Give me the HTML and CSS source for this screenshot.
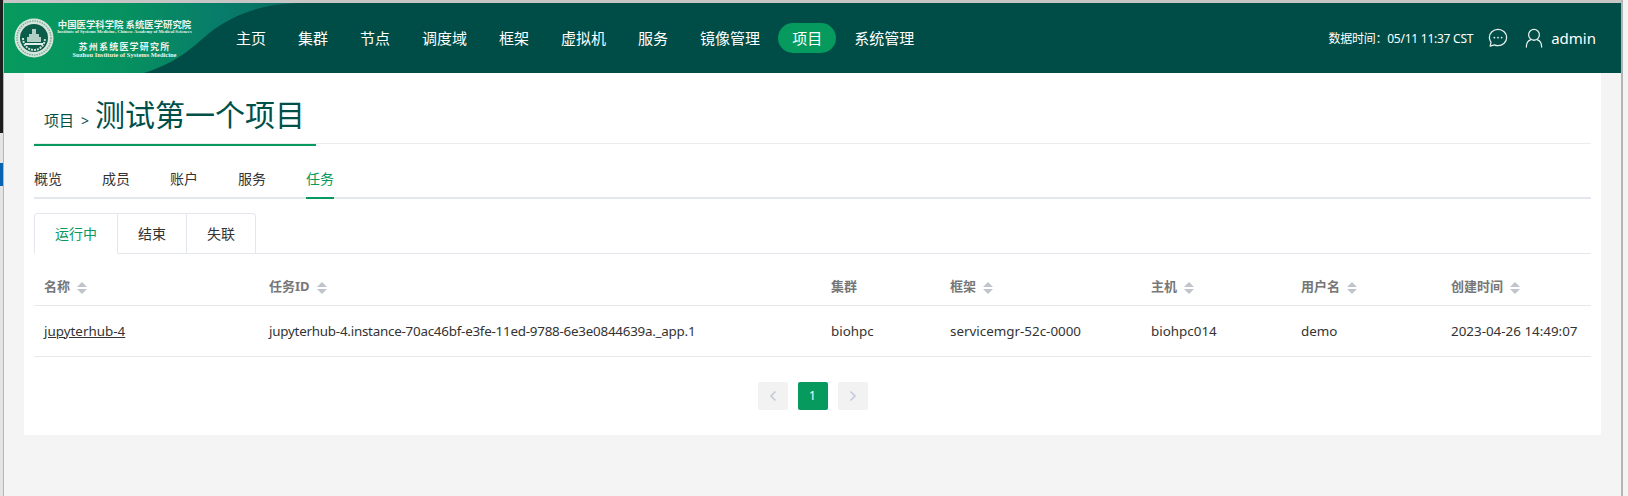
FILE: index.html
```html
<!DOCTYPE html>
<html lang="zh">
<head>
<meta charset="utf-8">
<title>测试第一个项目</title>
<link rel="stylesheet" href="styles.css">
</head>
<body>
<div class="desktop">
  <div class="edge">
    <div class="edge-dark"></div>
    <div class="edge-light"></div>
    <div class="edge-blue"></div>
    <div class="edge-rest"></div>
  </div>
  <div class="window">
    <header class="topbar">
      <div class="brand">
        <svg class="brand-bg" width="300" height="70" viewBox="0 0 300 70" aria-hidden="true">
          <defs>
            <linearGradient id="bg" x1="0" y1="0" x2="1" y2="0">
              <stop offset="0" stop-color="#069a5e"/>
              <stop offset="0.4" stop-color="#06915f"/>
              <stop offset="0.75" stop-color="#087b6b"/>
              <stop offset="1" stop-color="#07695f"/>
            </linearGradient>
          </defs>
          <path d="M0 0H296C262 1 236 8 209 27C190 42 178 58 140 70H0Z" fill="url(#bg)"/>
        </svg>
        <svg class="seal" width="40" height="40" viewBox="0 0 40 40" aria-hidden="true">
          <circle cx="20" cy="20" r="19.5" fill="#d5e6dd"/>
          <circle cx="20" cy="20" r="17" fill="none" stroke="#7fae9b" stroke-width="1.5" stroke-dasharray="1.5 1"/>
          <circle cx="20" cy="20" r="14" fill="#0b5c48"/>
          <path d="M9 20C9 27 14 32 20 32S31 27 31 20" fill="none" stroke="#cfe3da" stroke-width="2" stroke-dasharray="2 1"/>
          <path d="M13 19H27V24H13ZM15 16H25V19H15ZM18 11H22V16H18Z" fill="#cfe3da" opacity=".85"/>
          <path d="M11 26H29" stroke="#e3efe9" stroke-width="2"/>
        </svg>
        <div class="brand-text">
          <div class="org-cn">中国医学科学院 系统医学研究院</div>
          <div class="org-en">Institute of Systems Medicine, Chinese Academy of Medical Sciences</div>
          <div class="org-cn2">苏州系统医学研究所</div>
          <div class="org-en2">Suzhou Institute of Systems Medicine</div>
        </div>
      </div>
      <nav class="nav">
        <a class="nav-item">主页</a>
        <a class="nav-item">集群</a>
        <a class="nav-item">节点</a>
        <a class="nav-item">调度域</a>
        <a class="nav-item">框架</a>
        <a class="nav-item">虚拟机</a>
        <a class="nav-item">服务</a>
        <a class="nav-item">镜像管理</a>
        <a class="nav-item nav-active">项目</a>
        <a class="nav-item">系统管理</a>
      </nav>
      <div class="status">
        <span class="data-time">数据时间：05/11 11:37 CST</span>
        <svg class="icon-chat" width="20" height="20" viewBox="0 0 22 22" aria-hidden="true">
          <path d="M11 1.5C5.7 1.5 1.5 5.5 1.5 10.4c0 2 .7 3.700 1.800 5.200l-.9 4.300 4.600-1.400c1.200.6 2.600.9 4 .9 5.300 0 9.500-4 9.500-9S16.300 1.500 11 1.500Z" fill="none" stroke="#e6efec" stroke-width="1.400" stroke-linejoin="round"/>
          <circle cx="7" cy="10.500" r="1" fill="#e6efec"/>
          <circle cx="11" cy="10.500" r="1" fill="#e6efec"/>
          <circle cx="15" cy="10.500" r="1" fill="#e6efec"/>
        </svg>
        <svg class="icon-user" width="18" height="20" viewBox="0 0 20 22" aria-hidden="true">
          <circle cx="10" cy="7.500" r="6" fill="none" stroke="#e6efec" stroke-width="1.400"/>
          <path d="M1.500 21c0-4.500 2.500-7.500 5.200-8.300M18.500 21c0-4.500-2.500-7.500-5.200-8.300" fill="none" stroke="#e6efec" stroke-width="1.400" stroke-linecap="round"/>
        </svg>
        <span class="username">admin</span>
      </div>
    </header>
    <main class="page">
      <section class="card">
        <div class="crumbs">
          <div class="crumb-inner">
            <span class="crumb-link">项目</span>
            <span class="crumb-sep">&gt;</span>
            <h1 class="crumb-title">测试第一个项目</h1>
          </div>
        </div>
        <div class="tabs">
          <a class="tab">概览</a>
          <a class="tab">成员</a>
          <a class="tab">账户</a>
          <a class="tab">服务</a>
          <a class="tab tab-active">任务</a>
        </div>
        <div class="subtabs">
          <a class="subtab subtab-active">运行中</a>
          <a class="subtab">结束</a>
          <a class="subtab">失联</a>
        </div>
        <table class="grid">
          <colgroup>
            <col class="c1"><col class="c2"><col class="c3"><col class="c4"><col class="c5"><col class="c6"><col class="c7">
          </colgroup>
          <thead>
            <tr>
              <th>名称<span class="sort"></span></th>
              <th>任务ID<span class="sort"></span></th>
              <th>集群</th>
              <th>框架<span class="sort"></span></th>
              <th>主机<span class="sort"></span></th>
              <th>用户名<span class="sort"></span></th>
              <th>创建时间<span class="sort"></span></th>
            </tr>
          </thead>
          <tbody>
            <tr>
              <td><a class="job-link">jupyterhub-4</a></td>
              <td class="job-id">jupyterhub-4.instance-70ac46bf-e3fe-11ed-9788-6e3e0844639a._app.1</td>
              <td>biohpc</td>
              <td>servicemgr-52c-0000</td>
              <td>biohpc014</td>
              <td>demo</td>
              <td>2023-04-26 14:49:07</td>
            </tr>
          </tbody>
        </table>
        <div class="pager">
          <span class="page-btn"><svg width="8" height="12" viewBox="0 0 8 12" aria-hidden="true"><path d="M6.500 1.500 2 6l4.500 4.500" fill="none" stroke="#c3c9d6" stroke-width="1.600"/></svg></span>
          <span class="page-btn page-current">1</span>
          <span class="page-btn"><svg width="8" height="12" viewBox="0 0 8 12" aria-hidden="true"><path d="M1.500 1.500 6 6l-4.500 4.500" fill="none" stroke="#c3c9d6" stroke-width="1.600"/></svg></span>
        </div>
      </section>
    </main>
  </div>
  <div class="edge-right"></div>
</div>
</body>
</html>
```
FILE: styles.css
```css
* { box-sizing: border-box; }
html, body { margin: 0; padding: 0; height: 496px; overflow: hidden; background: #f4f4f4; }
body { font-family: "Noto Sans", "Noto Sans CJK SC", sans-serif; font-size: 14px; color: #333; }
a { color: inherit; }

.desktop { display: flex; height: 496px; }

.edge { width: 4px; flex: none; display: flex; flex-direction: column; border-right: 1px solid #b5b5b5; }
.edge-dark { height: 133px; background: #1e1e1e; }
.edge-light { height: 30px; background: #e4e4e4; }
.edge-blue { height: 23px; background: #0a63b0; }
.edge-rest { flex: 1; background: #e4e4e4; }
.edge-right { width: 7px; flex: none; background: #f4f4f4; border-left: 2px solid #b5b5b5; }

.window { flex: 1; min-width: 0; display: flex; flex-direction: column; border-top: 3px solid #c6c6c6; }

.topbar { height: 70px; flex: none; background: #004d47; color: #fff; display: flex; align-items: center; position: relative; }
.brand { width: 218px; height: 70px; flex: none; display: flex; align-items: center; padding-left: 10px; }
.brand-bg { position: absolute; left: 0; top: 0; }
.seal { position: relative; flex: none; }
.brand-text { position: relative; margin-left: 5px; width: 131px; flex: none; color: #eaf4ef; text-align: center; font-family: "Noto Sans CJK SC", sans-serif; }
.org-cn { font-size: 9.400px; line-height: 11px; font-weight: 700; white-space: nowrap; display: flex; justify-content: center; }
.org-en { font-size: 4.600px; line-height: 4px; white-space: nowrap; font-family: "Liberation Serif", serif; font-weight: 700; display: flex; justify-content: center; }
.org-cn2 { font-size: 9px; line-height: 11px; margin-top: 7px; font-weight: 700; letter-spacing: 1.200px; }
.org-en2 { font-size: 6.500px; line-height: 6px; white-space: nowrap; font-family: "Liberation Serif", serif; font-weight: 700; }

.nav { display: flex; align-items: center; gap: 4px; }
.nav-item { font-size: 15px; line-height: 30px; height: 30px; padding: 0 14px; border-radius: 15px; white-space: nowrap; font-family: "Noto Sans CJK SC", sans-serif; }
.nav-active { background: #069a5e; }

.status { margin-left: auto; display: flex; align-items: center; padding-right: 25px; }
.data-time { font-size: 12px; letter-spacing: -.25px; }
.icon-chat { margin-left: 15px; }
.icon-user { margin-left: 17px; }
.username { margin-left: 8px; font-size: 15px; }

.page { flex: 1; padding: 0 20px; }
.card { background: #fff; height: 362px; padding: 0 10px; }

.crumbs { height: 71px; margin-bottom: 1px; border-bottom: 1px solid #ececec; }
.crumb-inner { width: 282px; height: 73px; border-bottom: 2px solid #069a5e; display: flex; align-items: baseline; padding: 22px 0 0 10px; }
.crumb-link { font-size: 15px; color: #00504a; }
.crumb-sep { font-size: 14px; color: #00504a; margin: 0 6px 0 7px; }
.crumb-title { margin: 0; font-size: 30px; font-weight: 400; color: #00504a; line-height: 40px; }

.tabs { display: flex; gap: 40px; height: 54px; border-bottom: 2px solid #e4e7ed; }
.tab { font-size: 14px; line-height: 20px; padding: 24px 0 0; margin-bottom: -2px; color: #333; }
.tab-active { color: #069a5e; border-bottom: 2px solid #069a5e; }

.subtabs { display: flex; margin-top: 14px; height: 41px; border-bottom: 1px solid #e4e7ed; }
.subtab { font-size: 14px; line-height: 40px; height: 41px; padding: 0 20px; border: 1px solid #e4e7ed; border-left: none; color: #333; background: #fff; }
.subtab:first-child { border-left: 1px solid #e4e7ed; border-radius: 4px 0 0 0; }
.subtab:last-child { border-radius: 0 4px 0 0; }
.subtab-active { color: #069a5e; border-bottom-color: #fff; }

.grid { width: 100%; border-collapse: collapse; table-layout: fixed; }
.c1 { width: 225px; } .c2 { width: 562px; } .c3 { width: 119px; } .c4 { width: 201px; } .c5 { width: 150px; } .c6 { width: 150px; } .c7 { width: auto; }
.grid th, .grid td { padding: 0 0 0 10px; text-align: left; border-bottom: 1px solid #e8e8ea; white-space: nowrap; font-size: 13.400px; }
.grid th { height: 51px; padding-top: 13px; color: #777; font-weight: 700; font-size: 13px; }
.grid td { height: 51px; color: #333; }
.grid .job-id { letter-spacing: -.24px; }
.job-link { text-decoration: underline; }
.sort { display: inline-block; vertical-align: middle; width: 10px; height: 12px; margin-left: 7px; position: relative; }
.sort::before, .sort::after { content: ""; position: absolute; left: 0; border-left: 5px solid transparent; border-right: 5px solid transparent; }
.sort::before { top: 0; border-bottom: 5px solid #c0c4cc; }
.sort::after { bottom: 0; border-top: 5px solid #c0c4cc; }

.pager { display: flex; justify-content: center; gap: 10px; margin-top: 25px; }
.page-btn { width: 30px; height: 28px; border-radius: 2px; background: #f2f2f3; display: flex; align-items: center; justify-content: center; font-size: 12px; }
.page-current { background: #069a5e; color: #fff; }
```
